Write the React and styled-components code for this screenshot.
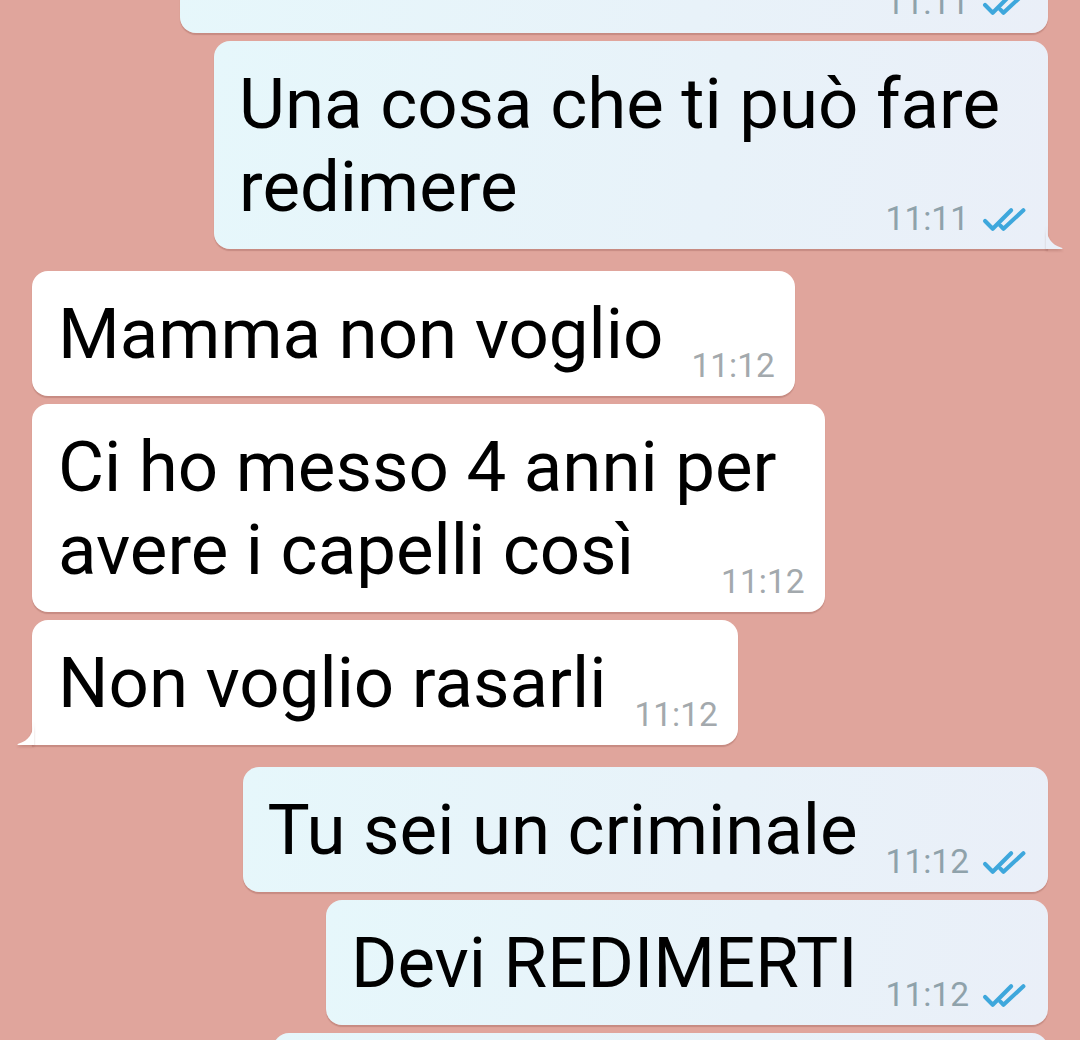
import React from 'react';
import styled, { createGlobalStyle, css } from 'styled-components';

const GlobalStyle = createGlobalStyle`
  html, body {
    margin: 0;
    padding: 0;
    background: #e0a59c;
  }
  body {
    font-family: Roboto, "Noto Sans", "Liberation Sans", sans-serif;
  }
`;

const messages = [
  { id: 0, out: true, text: 'Devi fare una cosa sì', time: '11:11' },
  { id: 1, out: true, text: 'Una cosa che ti può fare\nredimere', time: '11:11', tail: true },
  { id: 2, out: false, text: 'Mamma non voglio', time: '11:12', first: true },
  { id: 3, out: false, text: 'Ci ho messo 4 anni per\navere i capelli così', time: '11:12' },
  { id: 4, out: false, text: 'Non voglio rasarli', time: '11:12', tail: true },
  { id: 5, out: true, text: 'Tu sei un criminale', time: '11:12', first: true },
  { id: 6, out: true, text: 'Devi REDIMERTI', time: '11:12' },
  { id: 7, out: true, text: 'Vai dal barbiere sì', time: '11:12' },
];

const Screen = styled.div`
  height: 1040px;
  overflow: hidden;
`;

const Chat = styled.div`
  display: flex;
  flex-direction: column;
  gap: 8px;
  padding: 0 32px;
  margin-top: -92px;
`;

const Row = styled.div`
  display: flex;
  justify-content: ${p => (p.$out ? 'flex-end' : 'flex-start')};
  margin-top: ${p => (p.$first ? '14px' : '0')};
`;

const Bubble = styled.div`
  position: relative;
  display: grid;
  padding: 21px 20px 21px ${p => (p.$out ? '25px' : '26px')};
  border-radius: 16px;
  box-shadow: 0 2px 1px rgba(110, 50, 40, 0.22);
  color: #000;
  ${p =>
    p.$out
      ? css`
          background: linear-gradient(100deg, #e6f7fb 0%, #e8f2f9 60%, #eaeff8 100%);
        `
      : css`
          background: #ffffff;
        `}
  ${p =>
    p.$tail &&
    (p.$out
      ? css`
          border-bottom-right-radius: 0;
        `
      : css`
          border-bottom-left-radius: 0;
        `)}
`;

const Body = styled.div`
  grid-area: 1 / 1;
  padding-right: 28px;
  font-size: 70.8px;
  line-height: 83px;
  white-space: pre-line;
`;

const Meta = styled.div`
  grid-area: 1 / 1;
  justify-self: end;
  align-self: end;
  display: inline-flex;
  align-items: center;
  gap: 13px;
  margin-bottom: -9px;
  font-size: 33.5px;
  line-height: 36px;
  color: ${p => (p.$out ? '#8fa2ab' : '#a3a9ad')};
`;

const Spacer = styled(Meta)`
  display: inline-flex;
  visibility: hidden;
  margin: 0;
  height: 1px;
`;

const Tail = styled.svg`
  position: absolute;
  bottom: 0;
  width: 18px;
  height: 26px;
  ${p =>
    p.$out
      ? css`
          right: -16px;
          transform: scaleX(-1);
        `
      : css`
          left: -16px;
        `}
  filter: drop-shadow(0 2px 1px rgba(110, 50, 40, 0.22));
`;

const Ticks = styled.svg`
  width: 46px;
  height: 25px;
  display: block;
`;

const ReadTicks = () => (
  <Ticks viewBox="0 0 30 16">
    <g fill="none" stroke="#3ea7dc" strokeWidth="2.7" strokeLinecap="round" strokeLinejoin="round">
      <polyline points="2,9 7,14 19,2" />
      <polyline points="12,12 14,14 27,2" />
    </g>
  </Ticks>
);

const MetaContent = ({ msg }) => (
  <>
    <span>{msg.time}</span>
    {msg.out && <ReadTicks />}
  </>
);

const Message = ({ msg }) => (
  <Row $out={msg.out} $first={msg.first}>
    <Bubble $out={msg.out} $tail={msg.tail}>
      <Body>
        {msg.text}
        <Spacer as="span" $out={msg.out}>
          <MetaContent msg={msg} />
        </Spacer>
      </Body>
      <Meta $out={msg.out}>
        <MetaContent msg={msg} />
      </Meta>
      {msg.tail && (
        <Tail $out={msg.out} viewBox="0 0 18 26">
          <path
            d="M18 0 C18 15 12 22 3 24.5 Q0 25.5 2.5 26 L18 26 Z"
            fill={msg.out ? '#eaeff8' : '#ffffff'}
          />
        </Tail>
      )}
    </Bubble>
  </Row>
);

export default function App() {
  return (
    <Screen>
      <GlobalStyle />
      <Chat>
        {messages.map(m => (
          <Message key={m.id} msg={m} />
        ))}
      </Chat>
    </Screen>
  );
}
